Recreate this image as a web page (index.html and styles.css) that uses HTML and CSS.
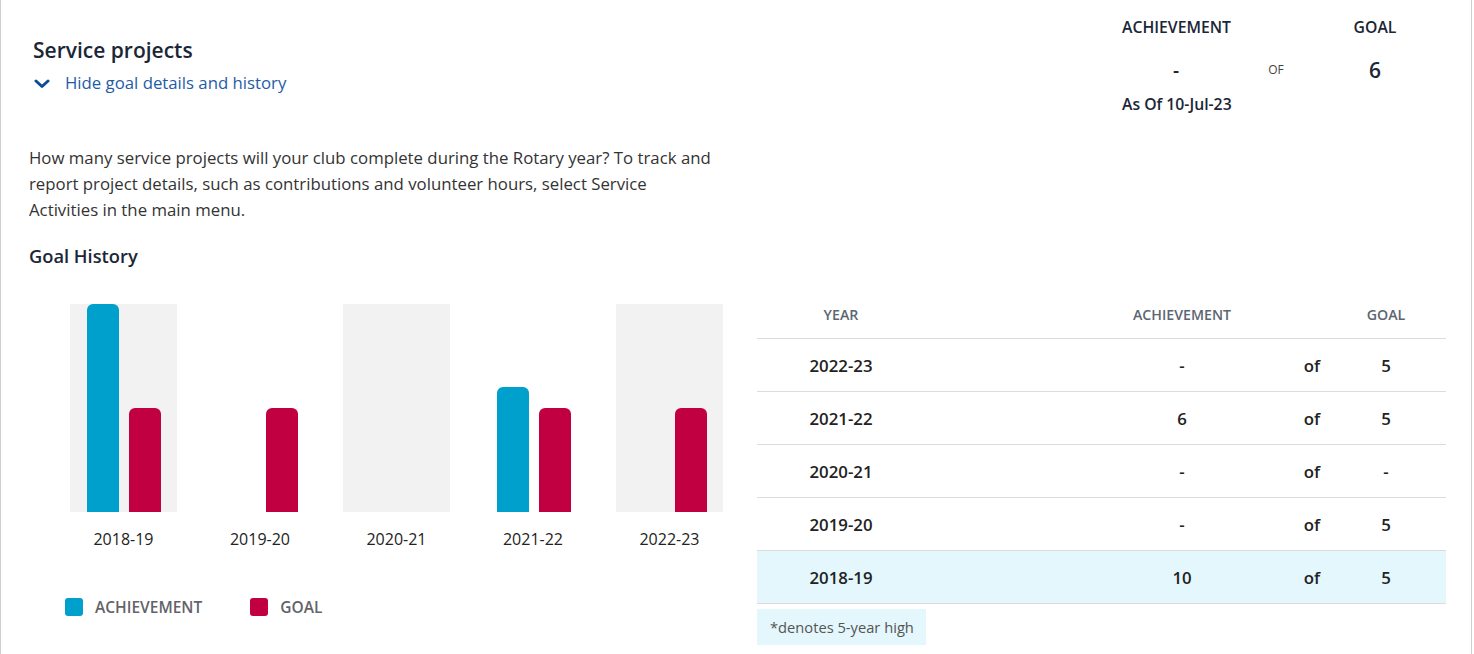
FILE: index.html
```html
<!DOCTYPE html>
<html lang="en">
<head>
<meta charset="utf-8">
<title>Service projects</title>
<link rel="stylesheet" href="styles.css">
</head>
<body>
<div class="card">
  <div class="top">
    <div class="title-block">
      <h2 class="title">Service projects</h2>
      <a class="toggle" href="#">
        <svg class="chev" width="16" height="10" viewBox="0 0 16 10"><path d="M2 2 L8 7.5 L14 2" fill="none" stroke="#0d4c98" stroke-width="3" stroke-linecap="round" stroke-linejoin="round"/></svg>
        <span>Hide goal details and history</span>
      </a>
    </div>
    <div class="stats">
      <div class="stat-head s-c1">ACHIEVEMENT</div>
      <div class="stat-head s-c3">GOAL</div>
      <div class="stat-val dash s-c1">-</div>
      <div class="stat-of s-c2">OF</div>
      <div class="stat-val s-c3">6</div>
      <div class="stat-date s-c1">As Of 10-Jul-23</div>
    </div>
  </div>

  <p class="desc">How many service projects will your club complete during the Rotary year? To track and report project details, such as contributions and volunteer hours, select Service Activities in the main menu.</p>

  <h3 class="history-title">Goal History</h3>

  <div class="lower">
    <div class="chart-col">
      <div class="chart">
        <div class="group">
          <div class="plot shade">
            <div class="bar ach" style="height:208px"></div>
            <div class="bar goal" style="height:104px"></div>
          </div>
          <div class="xlabel">2018-19</div>
        </div>
        <div class="group">
          <div class="plot">
            <div class="bar ach" style="height:0"></div>
            <div class="bar goal" style="height:104px"></div>
          </div>
          <div class="xlabel">2019-20</div>
        </div>
        <div class="group">
          <div class="plot shade">
            <div class="bar ach" style="height:0"></div>
            <div class="bar goal" style="height:0"></div>
          </div>
          <div class="xlabel">2020-21</div>
        </div>
        <div class="group">
          <div class="plot">
            <div class="bar ach" style="height:125px"></div>
            <div class="bar goal" style="height:104px"></div>
          </div>
          <div class="xlabel">2021-22</div>
        </div>
        <div class="group">
          <div class="plot shade">
            <div class="bar ach" style="height:0"></div>
            <div class="bar goal" style="height:104px"></div>
          </div>
          <div class="xlabel">2022-23</div>
        </div>
      </div>
      <div class="legend">
        <div class="legend-item"><span class="swatch ach"></span><span>ACHIEVEMENT</span></div>
        <div class="legend-item"><span class="swatch goal"></span><span>GOAL</span></div>
      </div>
    </div>

    <div class="table-col">
      <div class="table">
        <div class="row head">
          <div class="c-year">YEAR</div><div></div><div class="c-ach">ACHIEVEMENT</div><div></div><div class="c-goal">GOAL</div><div></div>
        </div>
        <div class="row">
          <div class="c-year">2022-23</div><div></div><div class="c-ach">-</div><div class="c-of">of</div><div class="c-goal">5</div><div></div>
        </div>
        <div class="row">
          <div class="c-year">2021-22</div><div></div><div class="c-ach">6</div><div class="c-of">of</div><div class="c-goal">5</div><div></div>
        </div>
        <div class="row">
          <div class="c-year">2020-21</div><div></div><div class="c-ach">-</div><div class="c-of">of</div><div class="c-goal">-</div><div></div>
        </div>
        <div class="row">
          <div class="c-year">2019-20</div><div></div><div class="c-ach">-</div><div class="c-of">of</div><div class="c-goal">5</div><div></div>
        </div>
        <div class="row high">
          <div class="c-year">2018-19</div><div></div><div class="c-ach">10</div><div class="c-of">of</div><div class="c-goal">5</div><div></div>
        </div>
      </div>
      <div class="note">*denotes 5-year high</div>
    </div>
  </div>
</div>
</body>
</html>
```

FILE: styles.css
```css
* { box-sizing: border-box; }

html, body {
  margin: 0;
  padding: 0;
  background: #ffffff;
}

body {
  font-family: "Open Sans", "Noto Sans", sans-serif;
  color: #222;
}

.card {
  width: 1472px;
  height: 654px;
  border-left: 1px solid #cfcfcf;
  border-right: 1px solid #cfcfcf;
  padding: 17px 0 0 27px;
  overflow: hidden;
}

.top {
  display: flex;
  justify-content: space-between;
  height: 114px;
}

.title-block {
  padding-top: 19px;
  padding-left: 5px;
}

.title {
  margin: 0;
  font-size: 21px;
  line-height: 28px;
  font-weight: 600;
  color: #1b2636;
}

.toggle {
  display: flex;
  align-items: center;
  margin-top: 7px;
  height: 24px;
  text-decoration: none;
  color: #1f5ca6;
  font-size: 16.75px;
  line-height: 24px;
}

.chev {
  margin-left: 1px;
  margin-right: 15px;
  margin-top: 2px;
}

.stats {
  display: grid;
  grid-template-columns: 108px 92px 106px;
  grid-template-rows: 20px 19px 28px 10px 20px;
  margin-right: 43px;
  color: #1b2636;
}

.s-c1 { grid-column: 1; }
.s-c2 { grid-column: 2; }
.s-c3 { grid-column: 3; }

.stat-head {
  grid-row: 1;
  text-align: center;
  font-size: 15.75px;
  line-height: 20px;
  font-weight: 600;
}

.stat-val {
  grid-row: 3;
  text-align: center;
  font-size: 21px;
  line-height: 28px;
  font-weight: 600;
}

.stat-val.dash {
  font-size: 19px;
}

.stat-of {
  grid-row: 3;
  text-align: center;
  font-size: 12px;
  line-height: 28px;
  color: #444;
}

.stat-date {
  grid-row: 5;
  text-align: center;
  font-size: 15.75px;
  line-height: 20px;
  font-weight: 600;
  white-space: nowrap;
}

.desc {
  margin: 14px 0 0 1px;
  width: 688px;
  font-size: 16.8px;
  line-height: 26px;
  color: #333;
}

.history-title {
  margin: 21px 0 0 1px;
  font-size: 18.3px;
  line-height: 24px;
  font-weight: 600;
  color: #1b2636;
}

.lower {
  display: flex;
  margin-top: 23px;
}

.chart-col {
  width: 729px;
  padding-top: 13px;
}

.chart {
  display: flex;
  gap: 29.5px;
  padding-left: 42px;
}

.group {
  width: 107px;
  display: flex;
  flex-direction: column;
  align-items: center;
}

.plot {
  width: 107px;
  height: 208px;
  display: flex;
  align-items: flex-end;
  gap: 10px;
  padding-left: 17px;
}

.plot.shade {
  background: #f2f2f2;
}

.bar {
  width: 32px;
  border-radius: 6px 6px 0 0;
}

.bar.ach { background: #00a0cc; }
.bar.goal { background: #c10042; }

.xlabel {
  margin-top: 16px;
  font-size: 16px;
  line-height: 22px;
  color: #222;
}

.legend {
  display: flex;
  gap: 48px;
  margin-top: 45px;
  padding-left: 37px;
}

.legend-item {
  display: flex;
  align-items: center;
  gap: 12px;
  font-size: 15.5px;
  line-height: 24px;
  font-weight: 600;
  color: #626468;
}

.swatch {
  width: 18px;
  height: 18px;
  border-radius: 3px;
}

.swatch.ach { background: #00a0cc; }
.swatch.goal { background: #c10042; }

.table-col {
  width: 689px;
}

.row {
  display: grid;
  grid-template-columns: 168px 177px 160px 100px 48px 36px;
  align-items: center;
  height: 53px;
  border-bottom: 1px solid #dcdcdc;
  font-size: 16.8px;
  font-weight: 600;
  color: #222;
  text-align: center;
}

.row.head {
  height: 48px;
  font-size: 14.2px;
  font-weight: 600;
  color: #5b6672;
}

.row.high {
  background: #e3f7fc;
}

.note {
  display: inline-block;
  margin-top: 5px;
  padding: 0 12px 0 13px;
  height: 36px;
  line-height: 36px;
  background: #e3f7fc;
  font-size: 14.7px;
  color: #555;
}
```
